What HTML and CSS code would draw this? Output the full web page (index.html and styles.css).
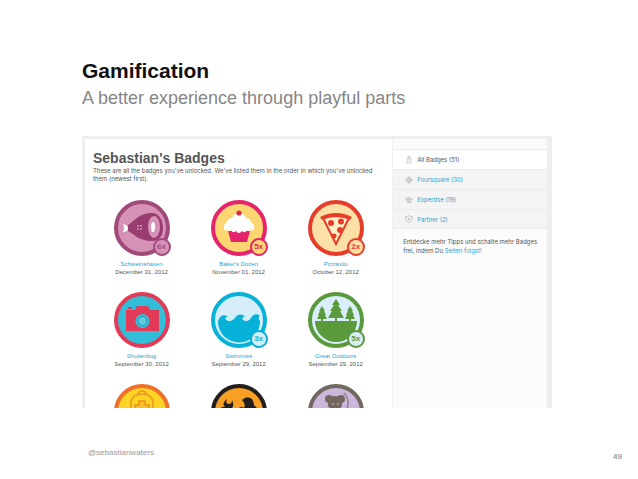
FILE: index.html
```html
<!DOCTYPE html>
<html lang="en">
<head>
  <meta charset="UTF-8">
  <meta name="viewport" content="width=device-width, initial-scale=1">
  <title>Gamification</title>
  <link rel="stylesheet" href="styles.css">
</head>
<body>
  <div class="slide">
    <header class="slide-header">
      <h1>Gamification</h1>
      <p>A better experience through playful parts</p>
    </header>

    <div class="window">
      <main class="badges">
        <h2>Sebastian's Badges</h2>
        <p class="intro">These are all the badges you've unlocked. We've listed them in the order in which you've unlocked them (newest first).</p>

        <ul class="badge-grid">
          <li class="badge pig">
            <div class="icon">
              <svg viewBox="0 0 56 56">
                <circle cx="28" cy="28" r="26" fill="#d792b7" stroke="#a04a7b" stroke-width="4"/>
                <path d="M14 25 C20 22 24 13 38 13 C45 13 49 20 49 28 C49 36 45 41 38 41 C25 41 20 34 14 31z" fill="#993d70"/>
                <ellipse cx="40" cy="27" rx="6" ry="11" fill="#d792b7"/>
                <ellipse cx="39" cy="27" rx="2" ry="5" fill="#fff"/>
                <path d="M9 24 q5 1 5 4 q0 4 -5 4 q2 -4 0 -8z" fill="#fff"/>
                <path d="M23 26h2m1 0h2m-5 3h2m1 0h2" stroke="#d792b7" stroke-width="1.5"/>
              </svg>
              <span class="count">6x</span>
            </div>
            <a href="#">Schweinshaxen</a>
            <time>December 31, 2012</time>
          </li>
          <li class="badge baker">
            <div class="icon">
              <svg viewBox="0 0 56 56">
                <circle cx="28" cy="28" r="26" fill="#fbd671" stroke="#e5246c" stroke-width="4"/>
                <path d="M17 31h22l-3 11H20z" fill="#e5246c"/>
                <path d="M13 29 q-1 -5 3 -7 q1 -4 5 -4 q2 -5 7 -5 q5 0 7 5 q4 0 5 4 q4 2 3 7 q-1 3 -3 0 q-1 4 -4 1 q-2 4 -5 1 q-3 4 -6 0 q-3 3 -5 -1 q-3 3 -4 -1 q-2 3 -3 0z" fill="#fff"/>
                <circle cx="28" cy="13" r="2.6" fill="#d92d45"/>
              </svg>
              <span class="count">5x</span>
            </div>
            <a href="#">Baker's Dozen</a>
            <time>November 01, 2012</time>
          </li>
          <li class="badge pizza">
            <div class="icon">
              <svg viewBox="0 0 56 56">
                <circle cx="28" cy="28" r="26" fill="#fce0a6" stroke="#e63d2b" stroke-width="4"/>
                <path d="M15 18 L28 44 L41 18" fill="#fff0c8" stroke="#e63d2b" stroke-width="2"/>
                <path d="M12 17 Q28 9 44 17 L42 20 Q28 14 14 20z" fill="#e63d2b"/>
                <circle cx="23" cy="23" r="3" fill="#e63d2b"/>
                <circle cx="33" cy="21.5" r="3" fill="#e63d2b"/>
                <circle cx="32" cy="30" r="3" fill="#e63d2b"/>
                <circle cx="26" cy="36" r="2.5" fill="#e63d2b"/>
              </svg>
              <span class="count">2x</span>
            </div>
            <a href="#">Pizzaiolo</a>
            <time>October 12, 2012</time>
          </li>
          <li class="badge camera">
            <div class="icon">
              <svg viewBox="0 0 56 56">
                <circle cx="28" cy="28" r="26" fill="#32bdd8" stroke="#e33b57" stroke-width="4"/>
                <path d="M12 18h9l2-4h11l2 4h9v21H12z" fill="#e33b57"/>
                <path d="M14 16h4" stroke="#e33b57" stroke-width="2"/>
                <circle cx="28.5" cy="29" r="7" fill="#32bdd8"/>
                <circle cx="28.5" cy="29" r="4.5" fill="#5ccbe0" stroke="#2c93b5"/>
              </svg>
            </div>
            <a href="#">Shutterbug</a>
            <time>September 30, 2012</time>
          </li>
          <li class="badge swim">
            <div class="icon">
              <svg viewBox="0 0 56 56">
                <circle cx="28" cy="28" r="26" fill="#d5eefa" stroke="#06b2d8" stroke-width="4"/>
                <path d="M7 30 C8 24 13 21 17 25 Q13 25 15 28 Q20 31 24 26 C26 22 31 21 34 25 Q30 25 32 28 Q37 31 40 26 C42 22 46 21 49 24 Q46 25 49 29 A21 21 0 0 1 7 30z" fill="#06b2d8"/>
              </svg>
              <span class="count">3x</span>
            </div>
            <a href="#">Swimmies</a>
            <time>September 29, 2012</time>
          </li>
          <li class="badge trees">
            <div class="icon">
              <svg viewBox="0 0 56 56">
                <circle cx="28" cy="28" r="26" fill="#d9eefa" stroke="#5a9a3c" stroke-width="4"/>
                <path d="M7 29h42a21 21 0 0 1 -42 0z" fill="#5a9a3c"/>
                <path d="M28 7l4 6h-2l4 6h-2l4 7h-7v4h-2v-4h-7l4-7h-2l4-6h-2z" fill="#5a9a3c"/>
                <path id="fir" d="M14 14l3 5h-1l2 4h-1l2 4h-4v3h-2v-3H9l2-4h-1l2-4h-1z" fill="#5a9a3c"/>
                <use href="#fir" x="28"/>
              </svg>
              <span class="count">5x</span>
            </div>
            <a href="#">Great Outdoors</a>
            <time>September 29, 2012</time>
          </li>
          <li class="badge">
            <div class="icon">
              <svg viewBox="0 0 56 56">
                <circle cx="28" cy="28" r="26" fill="#fdd324" stroke="#f0702a" stroke-width="4"/>
                <path d="M17 30V18q1-8 11-8t11 8v12M24 11q0-4 4-4t4 4" fill="none" stroke="#ef9320" stroke-width="1.5"/>
                <path d="M21 25v-4h4v-4h6v4h4v4z" fill="#fdbf24" stroke="#ef9320" stroke-width="1.5"/>
              </svg>
            </div>
          </li>
          <li class="badge">
            <div class="icon">
              <svg viewBox="0 0 56 56">
                <circle cx="28" cy="28" r="26" fill="#f8a023" stroke="#231f20" stroke-width="4"/>
                <path d="M9 25q2-3 5-2q-4-4 2-8q-2 5 2 5q3 0 3-4q3 6-1 9l-2 8H9q5-4 0-8z" fill="#231f20"/>
                <path d="M28 24q3-2 5 0q2-4-2-8q5-5 10-1q2 3 2 6l4 4v9H35q1-9-7-10z" fill="#231f20"/>
              </svg>
            </div>
          </li>
          <li class="badge">
            <div class="icon">
              <svg viewBox="0 0 56 56">
                <circle cx="28" cy="28" r="26" fill="#cbb7dc" stroke="#736860" stroke-width="4"/>
                <path d="M36 9q7 7 2 19" fill="none" stroke="#8e7f8c" stroke-width="1.5"/>
                <circle cx="21" cy="15" r="4" fill="#736860"/>
                <circle cx="33" cy="15" r="4" fill="#736860"/>
                <path d="M20 14q7-4 14 0v7q-1 4-4 4v3h-6v-3q-4-1-4-4z" fill="#736860"/>
                <path d="M24 20h2m3 0h2" stroke="#cbb7dc"/>
              </svg>
            </div>
          </li>
        </ul>
      </main>

      <aside class="sidebar">
        <nav>
          <a class="active" href="#">
            <svg viewBox="0 0 8 8"><path d="M2 2h4v6H2zM3 0h2v2H3z" fill="#eee" stroke="#ccc" stroke-width=".7"/></svg>
            All Badges (51)
          </a>
          <a href="#">
            <svg viewBox="0 0 8 8"><path d="M4 0l1.5 1.5 2.5 2.5-2.5 2.5L4 8 2.5 6.5 0 4l2.5-2.5z" fill="#ccc"/></svg>
            Foursquare (30)
          </a>
          <a href="#">
            <svg viewBox="0 0 8 8"><path d="M0 3l4-2 4 2-4 2zM2 4.5v2q2 1 4 0v-2L4 5.5zM0 3v3" fill="#ccc" stroke="#ccc" stroke-width=".4"/></svg>
            Expertise (19)
          </a>
          <a href="#">
            <svg viewBox="0 0 8 8"><path d="M.5 1.5Q2.5 2 4 .5q1.5 1.5 3.5 1Q8 6 4 7.6 0 6 .5 1.5z" fill="#eee" stroke="#bbb" stroke-width=".7"/><circle cx="4" cy="4" r="1" fill="#bbb"/></svg>
            Partner (2)
          </a>
        </nav>
        <p>Entdecke mehr Tipps und schalte mehr Badges frei, indem Du <a href="#">Seiten folgst!</a></p>
      </aside>
    </div>

    <footer class="slide-footer">
      <span class="author">@sebastianwaters</span>
      <span class="page">49</span>
    </footer>
  </div>
</body>
</html>
```
FILE: styles.css
```css
* {
  box-sizing: border-box;
}

body {
  margin: 0;
  font-family: "Liberation Sans", Arial, sans-serif;
  background: #fff;
  color: #555;
}

h1, h2, p, ul {
  margin: 0;
  padding: 0;
}

a {
  color: #2ba5cc;
  text-decoration: none;
}

.slide {
  min-height: 100vh;
  display: flex;
  flex-direction: column;
  padding: 58px 16px 16px 82px;
}

.slide-header {
  margin-bottom: 24px;
}

.slide-header h1 {
  font-size: 21px;
  line-height: 26px;
  color: #111;
}

.slide-header p {
  font-size: 18px;
  line-height: 28px;
  color: #868686;
}

.window {
  display: flex;
  margin-right: 70px;
  aspect-ratio: 470 / 272;
  overflow: hidden;
  border: solid #eee;
  border-width: 3px 5px 0 3px;
}

/* badge list */
.badges {
  width: 66.5%;
  padding: 10px 8px 0;
}

.badges h2 {
  font-size: 14px;
  line-height: 18px;
}

.intro {
  padding-right: 4px;
  font-family: Inter, "Liberation Sans", sans-serif;
  font-size: 6px;
  line-height: 8px;
}

.badge-grid {
  display: grid;
  grid-template-columns: repeat(3, 1fr);
  row-gap: 16px;
  margin-top: 17px;
  list-style: none;
}

.badge {
  display: flex;
  flex-direction: column;
  align-items: center;
  font-size: 6px;
  line-height: 8px;
}

.icon {
  position: relative;
  width: 56px;
  height: 56px;
  margin-bottom: 4px;
}

.icon svg {
  display: block;
}

.count {
  position: absolute;
  right: -1px;
  bottom: 0;
  width: 18px;
  height: 18px;
  border: 2px solid;
  border-radius: 50%;
  font-size: 8px;
  font-weight: bold;
  line-height: 14px;
  text-align: center;
}

.pig .count { color: #a04a7b; background: #d792b7; }
.baker .count { color: #e5246c; background: #fbd671; }
.pizza .count { color: #e63d2b; background: #fce0a6; }
.swim .count { color: #06b2d8; background: #d5eefa; }
.trees .count { color: #5a9a3c; background: #d9eefa; }

/* sidebar */
.sidebar {
  flex: 1;
  padding-top: 10px;
  background: #fbfbfb;
  border-left: 1px solid #f1f1f1;
  font-family: Inter, "Liberation Sans", sans-serif;
  font-size: 6px;
}

.sidebar nav a {
  display: flex;
  align-items: center;
  gap: 4px;
  height: 20px;
  padding-left: 12px;
  background: #f4f4f4;
  border-top: 1px solid #ebebeb;
}

.sidebar nav a:last-child {
  border-bottom: 1px solid #ebebeb;
}

.sidebar nav .active {
  background: #fff;
  color: #555;
}

.sidebar nav svg {
  width: 8px;
  height: 8px;
}

.sidebar p {
  padding: 8px 6px 0 10px;
  line-height: 9px;
}

.sidebar p a {
  display: inline-block;
}

/* footer */
.slide-footer {
  display: flex;
  justify-content: space-between;
  align-items: flex-end;
  margin-top: auto;
  padding-left: 6px;
  font-size: 8px;
  line-height: 12px;
  color: #999;
}

.author {
  padding-bottom: 4px;
}

.page {
  color: #777;
}
```
